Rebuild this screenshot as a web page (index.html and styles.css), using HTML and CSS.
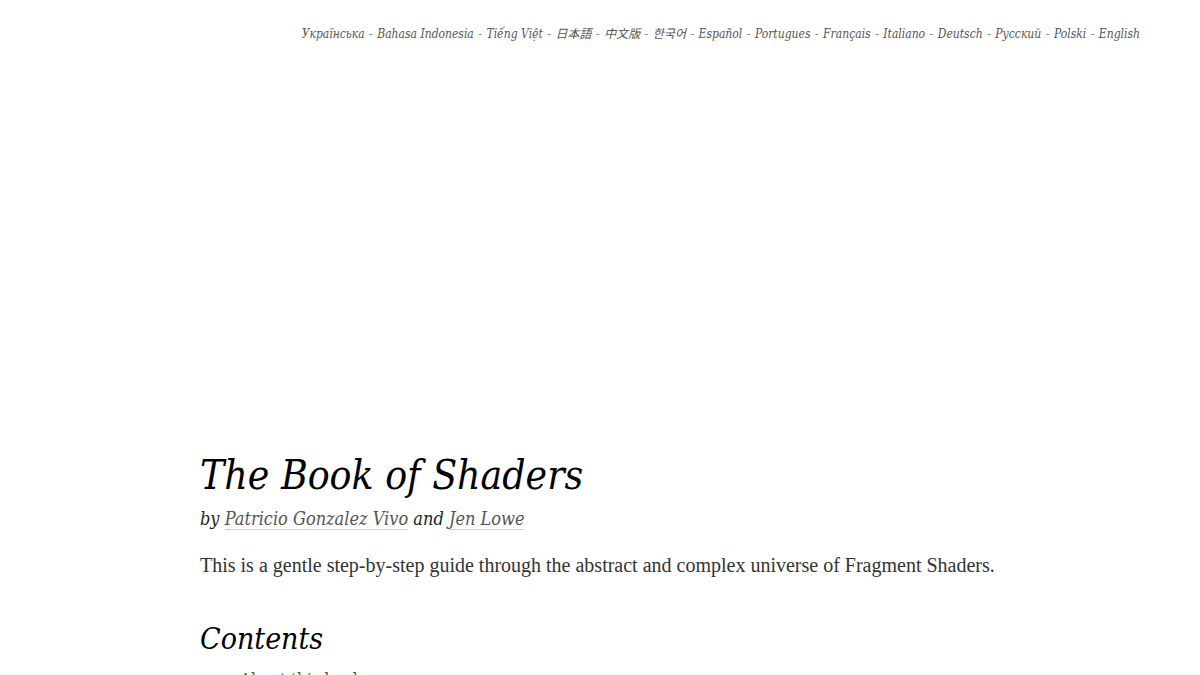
FILE: index.html
```html
<!DOCTYPE html>
<html>
<head>
<meta charset="utf-8">
<link rel="stylesheet" href="styles.css">
</head>
<body>
<nav class="langs">
<a>Українська</a><span class="sep">-</span><a>Bahasa Indonesia</a><span class="sep">-</span><a>Tiếng Việt</a><span class="sep">-</span><a>日本語</a><span class="sep">-</span><a>中文版</a><span class="sep">-</span><a>한국어</a><span class="sep">-</span><a>Español</a><span class="sep">-</span><a>Portugues</a><span class="sep">-</span><a>Français</a><span class="sep">-</span><a>Italiano</a><span class="sep">-</span><a>Deutsch</a><span class="sep">-</span><a>Русский</a><span class="sep">-</span><a>Polski</a><span class="sep">-</span><a>English</a>
</nav>
<div class="canvas"></div>
<main class="content">
<h1 class="title">The Book of Shaders</h1>
<p class="authors">by <a>Patricio Gonzalez Vivo</a> and <a>Jen Lowe</a></p>
<p class="intro">This is a gentle step-by-step guide through the abstract and complex universe of Fragment Shaders.</p>
<h2 class="contents-title">Contents</h2>
<ul class="toc">
<li>About this book</li>
</ul>
</main>
</body>
</html>
```
FILE: styles.css
```css
html, body { margin: 0; padding: 0; background: #fff; }
body { font-family: "Liberation Serif", serif; color: #222; }
.langs {
  display: flex; justify-content: flex-end; align-items: baseline;
  padding: 24px 60px 0 0; height: 21px;
  font-family: "DejaVu Serif Condensed", "DejaVu Serif", "Noto Sans CJK JP", serif;
  font-stretch: condensed; font-style: italic;
  font-size: 12px; color: #555;
}
.langs a { color: #555; }
.langs .sep { margin: 0 4.5px; color: #888; }
.canvas { height: 400px; }
.content { padding: 0 200px; }
.title, .authors, .contents-title {
  font-family: "DejaVu Serif Condensed", "DejaVu Serif", serif;
  font-stretch: condensed; font-style: italic; font-weight: normal;
}
.title { font-size: 40.5px; margin: 0; line-height: 60px; color: #000; }
.authors { font-size: 18px; margin: 0; line-height: 28px; color: #222; }
.authors a { color: #555; border-bottom: 1px solid #ccc; }
.intro { font-size: 20px; color: #333; margin: 18px 0 0; line-height: 28px; }
.contents-title { font-size: 30px; margin: 38px 0 0; line-height: 44px; color: #000; }
.toc {
  font-family: "DejaVu Serif Condensed", "DejaVu Serif", serif; font-stretch: condensed;
  color: #555; font-size: 17px; margin: 8px 0 0; padding-left: 40px; list-style: none;
}
```
